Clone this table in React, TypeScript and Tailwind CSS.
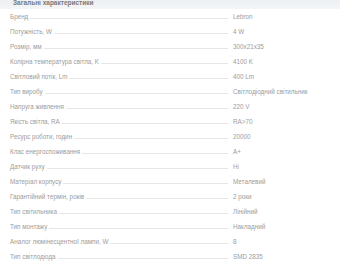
const rows: [string, string][] = [
  ["Бренд", "Lebron"],
  ["Потужність, W", "4 W"],
  ["Розмір, мм", "300x21x35"],
  ["Колірна температура світла, K", "4100 K"],
  ["Світловий потік, Lm", "400 Lm"],
  ["Тип виробу", "Світлодіодний світильник"],
  ["Напруга живлення", "220 V"],
  ["Якість світла, RA", "RA>70"],
  ["Ресурс роботи, годин", "20000"],
  ["Клас енергоспоживання", "A+"],
  ["Датчик руху", "Ні"],
  ["Матеріал корпусу", "Металевий"],
  ["Гарантійний термін, років", "2 роки"],
  ["Тип світильника", "Лінійний"],
  ["Тип монтажу", "Накладний"],
  ["Аналог люмінесцентної лампи, W", "8"],
  ["Тип світлодіода", "SMD 2835"],
];

export default function App() {
  return (
    <div className="w-[340px] h-[269px] overflow-hidden bg-white font-['Liberation_Sans',Arial,sans-serif]">
      <div className="h-[9px] bg-gradient-to-b from-[#edf0f3] to-[#f3f5f7] pl-[13px] overflow-hidden">
        <div className="text-[6.5px] font-bold leading-[7px] text-[#7a7a7a] -mt-[1px]">Загальні характеристики</div>
      </div>
      <div>
        {rows.map(([label, value]) => (
          <div key={label} className="flex items-end h-[15px] pb-[4px] text-[6.3px] leading-none text-[#9c9c9c]">
            <span className="pl-[10px] whitespace-nowrap">{label}</span>
            <div className="flex-1 h-px bg-[#e6e6e6] ml-[2px] mr-[5px] mb-[1px]" />
            <span className="w-[107px] whitespace-nowrap">{value}</span>
          </div>
        ))}
      </div>
    </div>
  );
}
